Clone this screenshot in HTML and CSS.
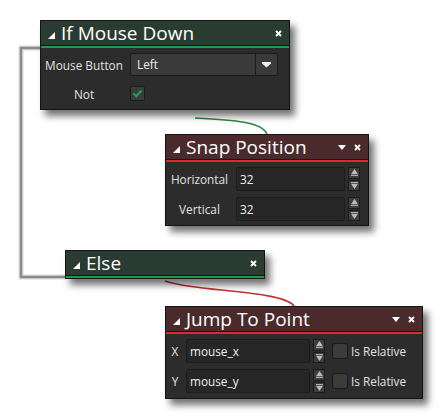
FILE: index.html
```html
<!DOCTYPE html>
<html>
<head>
<meta charset="utf-8">
<link rel="stylesheet" href="styles.css">
</head>
<body>
<div class="canvas">
  <svg class="wires" width="444" height="419" viewBox="0 0 444 419">
    <polyline points="41,48 21,48 21,277 66,277" fill="none" stroke="#dcdcdc" stroke-width="5"/>
    <polyline points="41,48 21,48 21,277 66,277" fill="none" stroke="#8a8a8a" stroke-width="2.5"/>
    <path d="M 195 118 C 235 120, 262 122, 267 134" fill="none" stroke="#2c8a3c" stroke-width="1.6"/>
    <path d="M 165 281 C 195 292, 282 290, 294 306" fill="none" stroke="#c83232" stroke-width="1.6"/>
  </svg>

  <div class="node n-if">
    <div class="hdr hdr-green">
      <svg class="tri" width="7" height="7" viewBox="0 0 7 7"><polygon points="0,7 7,7 7,0" fill="#fff"/></svg>
      <span class="title">If Mouse Down</span>
      <span class="icons">
        <svg class="xic" width="7" height="7" viewBox="0 0 7 7"><path d="M1 1 L6 6 M6 1 L1 6" stroke="#fff" stroke-width="1.8"/></svg>
      </span>
    </div>
    <div class="bar bar-green"></div>
    <div class="body grid-if">
      <span class="lbl">Mouse Button</span>
      <div class="select">
        <span class="sel-text">Left</span>
        <span class="sel-btn"><svg width="9" height="6" viewBox="0 0 9 6"><polygon points="0,0 9,0 9,1.5 4.5,5.5 0,1.5" fill="#eee"/></svg></span>
      </div>
      <span class="lbl">Not</span>
      <div class="cell"><span class="check"><svg width="11" height="9" viewBox="0 0 11 9"><path d="M1.5 4.5 L4.2 7.2 L9.5 1.5" fill="none" stroke="#19a350" stroke-width="2.2"/></svg></span></div>
    </div>
  </div>

  <div class="node n-snap">
    <div class="hdr hdr-red">
      <svg class="tri" width="7" height="7" viewBox="0 0 7 7"><polygon points="0,7 7,7 7,0" fill="#fff"/></svg>
      <span class="title">Snap Position</span>
      <span class="icons">
        <svg width="8" height="5" viewBox="0 0 8 5"><polygon points="0,0 8,0 4,5" fill="#fff"/></svg>
        <svg class="xic" width="7" height="7" viewBox="0 0 7 7"><path d="M1 1 L6 6 M6 1 L1 6" stroke="#fff" stroke-width="1.8"/></svg>
      </span>
    </div>
    <div class="bar bar-red"></div>
    <div class="body grid-snap">
      <span class="lbl">Horizontal</span>
      <div class="input">32</div>
      <div class="spin">
        <span class="sb"><svg width="7" height="7" viewBox="0 0 8 8"><polygon points="4,0 8,6 0,6" fill="#bbb"/><rect x="0" y="7" width="8" height="1" fill="#bbb"/></svg></span>
        <span class="sb"><svg width="7" height="7" viewBox="0 0 8 8"><rect x="0" y="0" width="8" height="1" fill="#bbb"/><polygon points="0,2 8,2 4,8" fill="#bbb"/></svg></span>
      </div>
      <span class="lbl">Vertical</span>
      <div class="input">32</div>
      <div class="spin">
        <span class="sb"><svg width="7" height="7" viewBox="0 0 8 8"><polygon points="4,0 8,6 0,6" fill="#bbb"/><rect x="0" y="7" width="8" height="1" fill="#bbb"/></svg></span>
        <span class="sb"><svg width="7" height="7" viewBox="0 0 8 8"><rect x="0" y="0" width="8" height="1" fill="#bbb"/><polygon points="0,2 8,2 4,8" fill="#bbb"/></svg></span>
      </div>
    </div>
  </div>

  <div class="node n-else">
    <div class="hdr hdr-green">
      <svg class="tri" width="7" height="7" viewBox="0 0 7 7"><polygon points="0,7 7,7 7,0" fill="#fff"/></svg>
      <span class="title">Else</span>
      <span class="icons">
        <svg class="xic" width="7" height="7" viewBox="0 0 7 7"><path d="M1 1 L6 6 M6 1 L1 6" stroke="#fff" stroke-width="1.8"/></svg>
      </span>
    </div>
    <div class="bar bar-green"></div>
  </div>

  <div class="node n-jump">
    <div class="hdr hdr-red">
      <svg class="tri" width="7" height="7" viewBox="0 0 7 7"><polygon points="0,7 7,7 7,0" fill="#fff"/></svg>
      <span class="title">Jump To Point</span>
      <span class="icons">
        <svg width="8" height="5" viewBox="0 0 8 5"><polygon points="0,0 8,0 4,5" fill="#fff"/></svg>
        <svg class="xic" width="7" height="7" viewBox="0 0 7 7"><path d="M1 1 L6 6 M6 1 L1 6" stroke="#fff" stroke-width="1.8"/></svg>
      </span>
    </div>
    <div class="bar bar-red"></div>
    <div class="body grid-jump">
      <span class="lbl">X</span>
      <div class="input">mouse_x</div>
      <div class="spin">
        <span class="sb"><svg width="7" height="7" viewBox="0 0 8 8"><polygon points="4,0 8,6 0,6" fill="#bbb"/><rect x="0" y="7" width="8" height="1" fill="#bbb"/></svg></span>
        <span class="sb"><svg width="7" height="7" viewBox="0 0 8 8"><rect x="0" y="0" width="8" height="1" fill="#bbb"/><polygon points="0,2 8,2 4,8" fill="#bbb"/></svg></span>
      </div>
      <span class="box"></span>
      <span class="lbl lbl-left">Is Relative</span>
      <span class="lbl">Y</span>
      <div class="input">mouse_y</div>
      <div class="spin">
        <span class="sb"><svg width="7" height="7" viewBox="0 0 8 8"><polygon points="4,0 8,6 0,6" fill="#bbb"/><rect x="0" y="7" width="8" height="1" fill="#bbb"/></svg></span>
        <span class="sb"><svg width="7" height="7" viewBox="0 0 8 8"><rect x="0" y="0" width="8" height="1" fill="#bbb"/><polygon points="0,2 8,2 4,8" fill="#bbb"/></svg></span>
      </div>
      <span class="box"></span>
      <span class="lbl lbl-left">Is Relative</span>
    </div>
  </div>
</div>
</body>
</html>
```

FILE: styles.css
```css
* { box-sizing: border-box; }
html, body { margin: 0; padding: 0; background: #fff; }
body { font-family: "Open Sans", "Noto Sans", sans-serif; }

.canvas { position: relative; width: 444px; height: 419px; overflow: hidden; background: #fff; }
.wires { position: absolute; left: 0; top: 0; }

.node {
  position: absolute;
  background: #2c2c2c;
  border: 1px solid #141414;
  box-shadow: 5px 6px 7px rgba(0,0,0,0.55);
}
.n-if { left: 40px; top: 20px; width: 250px; height: 90px; }
.n-snap { left: 165px; top: 134px; width: 204px; height: 92px; }
.n-else { left: 65px; top: 250px; width: 200px; }
.n-jump { left: 165px; top: 306px; width: 258px; height: 93px; }

.hdr {
  height: 25px;
  display: flex;
  align-items: center;
  padding: 0 7px 0 7px;
  border-bottom: 1px solid #151515;
  color: #fff;
}
.hdr-green { background: #2a3b31; }
.hdr-red { background: #4b2a2c; }
.tri { flex: none; margin-top: 5px; margin-right: 6px; }
.title { font-size: 19px; line-height: 24px; white-space: nowrap; }
.icons { margin-left: auto; display: flex; align-items: center; gap: 8px; }
.xic { display: block; }

.bar { height: 2px; }
.bar-green { background: #1b9a4c; }
.bar-red { background: #e0282c; }

.body { display: grid; align-items: center; }
.grid-if {
  grid-template-columns: 86px 148px;
  grid-auto-rows: 23px;
  row-gap: 6px;
  column-gap: 3px;
  padding: 5px 0 0 0;
}
.grid-snap {
  grid-template-columns: 67px 109px 12px;
  grid-auto-rows: 24px;
  row-gap: 6px;
  column-gap: 3px;
  padding: 5px 0 0 0;
}
.grid-jump {
  grid-template-columns: 16px 124px 12px 16px auto;
  grid-auto-rows: 24px;
  row-gap: 6px;
  column-gap: 3px;
  padding: 5px 0 0 1px;
}
.grid-jump .box { margin-left: 4px; }
.grid-jump .lbl-left { margin-left: 4px; }

.lbl { font-size: 11.8px; color: #e2e2e2; text-align: center; white-space: nowrap; }
.lbl-left { text-align: left; }

.select {
  display: flex;
  height: 23px;
  background: #3a3a3a;
  border: 1px solid #1b1b1b;
  border-radius: 2px;
}
.sel-text { flex: 1; font-size: 11.8px; color: #eee; line-height: 21px; padding-left: 6px; }
.sel-btn { width: 22px; border-left: 1px solid #1b1b1b; display: flex; align-items: center; justify-content: center; }

.cell { display: flex; align-items: center; }
.check {
  width: 15px; height: 15px;
  background: #3c3c3c;
  border: 1px solid #1b1b1b;
  border-radius: 2px;
  display: flex; align-items: center; justify-content: center;
}

.input {
  height: 100%;
  background: #262626;
  border: 1px solid #1c1c1c;
  border-radius: 2px;
  font-size: 11.8px;
  color: #f0f0f0;
  line-height: 22px;
  padding-left: 3px;
}
.spin { display: flex; flex-direction: column; gap: 1px; height: 100%; }
.sb {
  flex: 1;
  background: #3d3d3d;
  border: 1px solid #1c1c1c;
  display: flex; align-items: center; justify-content: center;
}
.box {
  width: 16px; height: 16px;
  background: #3b3b3b;
  border: 1px solid #1a1a1a;
  border-radius: 3px;
}
```
